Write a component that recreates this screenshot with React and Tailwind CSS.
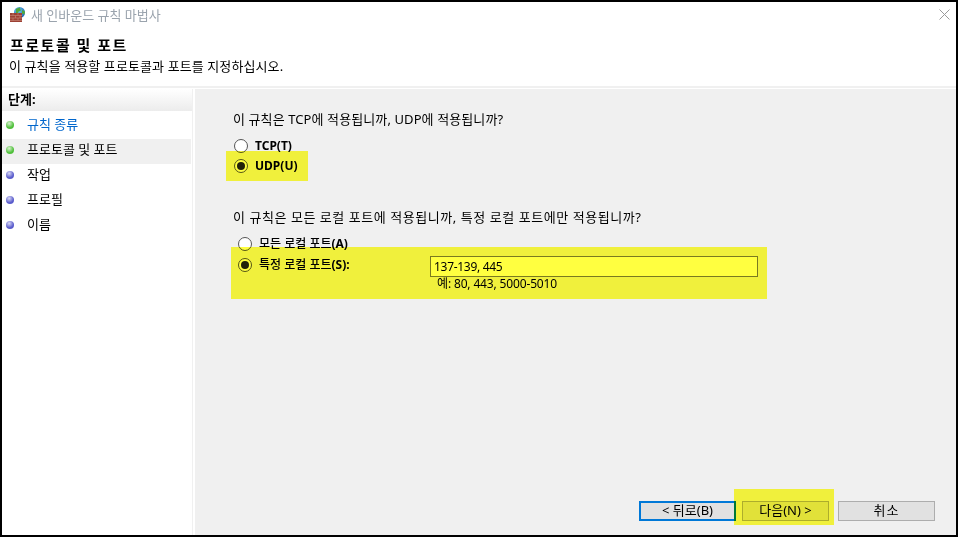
import React from "react";

const steps = [
  { label: "규칙 종류", color: "green", link: true },
  { label: "프로토콜 및 포트", color: "green", active: true },
  { label: "작업", color: "blue" },
  { label: "프로필", color: "blue" },
  { label: "이름", color: "blue" },
];

const FirewallIcon = () => (
  <svg width="16" height="16" viewBox="0 0 16 16" className="mb-[2px] shrink-0">
    <defs>
      <radialGradient id="globe" cx="0.4" cy="0.35" r="0.7">
        <stop offset="0" stopColor="#6fd0f0" />
        <stop offset="1" stopColor="#1a5fb0" />
      </radialGradient>
    </defs>
    <circle cx="9.5" cy="5.5" r="5.5" fill="url(#globe)" />
    <path d="M6 2 L9.5 0.5 L11 3.5 L8 5 L9 7 L6 6 Z" fill="#4fa83a" />
    <path d="M12 3 L15 4.5 L14.5 7.5 L12 6.5 Z" fill="#4fa83a" />
    <rect x="0" y="6" width="12" height="9" fill="#9c4034" />
    <path d="M0 8.5 H12 M0 11 H12 M0 13.5 H12 M3 6 V8.5 M8 6 V8.5 M5.5 8.5 V11 M10 8.5 V11 M3 11 V13.5 M8 11 V13.5" stroke="#c98a78" strokeWidth="0.6" fill="none" />
  </svg>
);

const CloseIcon = () => (
  <svg width="11" height="11" viewBox="0 0 11 11" className="mb-[4px]">
    <path d="M0.5 0.5 L10.5 10.5 M10.5 0.5 L0.5 10.5" stroke="#9a9a9a" strokeWidth="1" fill="none" />
  </svg>
);

const Radio = ({ checked }) => (
  <span className="flex h-[14px] w-[14px] shrink-0 items-center justify-center rounded-full border border-[#555] bg-white">
    {checked && <span className="h-[8px] w-[8px] rounded-full bg-[#222]" />}
  </span>
);

const RadioRow = ({ checked, label, accessKey, className }) => (
  <div className={`flex h-[20px] items-center gap-[7px] ${className || ""}`}>
    <Radio checked={checked} />
    <span className="text-[12px] font-bold text-black">
      {label && <span className="font-medium">{label}</span>}
      {accessKey}
    </span>
  </div>
);

const Dot = ({ color }) => (
  <span
    className={
      color === "green"
        ? "h-[8px] w-[8px] rounded-full bg-[radial-gradient(circle_at_40%_30%,#d8f0d0,#4fc03a_60%)]"
        : "h-[8px] w-[8px] rounded-full bg-[radial-gradient(circle_at_40%_30%,#d8d8f4,#5a5ccc_60%)]"
    }
  />
);

const Button = ({ children, className }) => (
  <button className={`flex h-[20px] items-center justify-center bg-[#e1e1e1] text-[13px] text-black ${className}`}>
    {children}
  </button>
);

const App = () => {
  return (
    <div
      className="relative h-[537px] w-[958px] overflow-hidden border-2 border-black bg-white"
      style={{ fontFamily: '"Noto Sans", "Noto Sans CJK KR", sans-serif' }}
    >
      <div className="flex h-[28px] items-center justify-between pl-[8px] pr-[6px]">
        <div className="flex items-center gap-[5px]">
          <FirewallIcon />
          <span className="text-[13px] text-[#9aa3ad]">새 인바운드 규칙 마법사</span>
        </div>
        <CloseIcon />
      </div>

      <div className="h-[58px] border-b-2 border-[#f0f0f0] pl-[7px]">
        <div className="pt-[3px] pl-[1px] text-[15px] leading-[24px] font-bold tracking-[1.5px] text-black">프로토콜 및 포트</div>
        <div className="text-[13px] leading-[18px] tracking-[0.1px] text-black">이 규칙을 적용할 프로토콜과 포트를 지정하십시오.</div>
      </div>

      <div className="flex h-[447px] pt-[1px]">
        <div className="w-[191px] shrink-0 border-r border-[#f0f0f0] bg-white">
          <div className="flex h-[22px] items-center bg-gradient-to-b from-white to-[#ececec] pl-[6px] text-[13px] font-bold text-black">
            단계:
          </div>
          <div className="w-[189px] pt-[3px]">
            {steps.map((step) => (
              <div
                key={step.label}
                className={`flex h-[25px] items-center gap-[13px] pb-[3px] pl-[4px] text-[13px] ${step.active ? "bg-[#f0f0f0]" : ""} ${step.link ? "text-[#0066cc]" : "text-black"}`}
              >
                <Dot color={step.color} />
                <span>{step.label}</span>
              </div>
            ))}
          </div>
        </div>

        <div className="ml-[2px] flex flex-1 flex-col bg-[#f0f0f0] pl-[38px]">
          <div className="pt-[21px] text-[13px] leading-[18px] tracking-[0.1px] text-black">이 규칙은 TCP에 적용됩니까, UDP에 적용됩니까?</div>
          <div className="pt-[8px] pl-[1px]">
            <RadioRow accessKey="TCP(T)" />
            <RadioRow checked accessKey="UDP(U)" />
          </div>
          <div className="pt-[32px] text-[13px] leading-[18px] tracking-[0.55px] text-black">이 규칙은 모든 로컬 포트에 적용됩니까, 특정 로컬 포트에만 적용됩니까?</div>
          <div className="pt-[7px]">
            <RadioRow className="ml-[5px] h-[21px]" label="모든 로컬 포트" accessKey="(A)" />
            <div className="flex h-[21px] items-center">
              <RadioRow checked className="ml-[5px] w-[192px]" label="특정 로컬 포트" accessKey="(S):" />
              <input
                readOnly
                value="137-139, 445"
                className="mt-[4px] h-[21px] w-[328px] border border-[#7a7a7a] bg-white pl-[3px] text-[12px] tracking-[-0.3px] text-black outline-none"
              />
            </div>
            <div className="mt-[1px] pl-[204px] text-[12px] leading-[16px] tracking-[-0.15px] text-black">예: 80, 443, 5000-5010</div>
          </div>
          <div className="mt-auto flex justify-end gap-[6px] pr-[21px] pb-[14px]">
            <Button className="w-[97px] border-2 border-[#0078d7]">&lt; 뒤로(B)</Button>
            <Button className="w-[87px] border border-[#adadad]">다음(N) &gt;</Button>
            <Button className="ml-[3px] w-[97px] border border-[#adadad] tracking-[1px]">취소</Button>
          </div>
        </div>
      </div>

      {/* marker highlights drawn over the dialog */}
      <div className="absolute top-[149px] left-[224px] h-[30px] w-[82px] bg-[#ffff40] mix-blend-multiply" />
      <div className="absolute top-[245px] left-[229px] h-[52px] w-[536px] bg-[#ffff40] mix-blend-multiply" />
      <div className="absolute top-[487px] left-[732px] h-[36px] w-[100px] bg-[#ffff40] mix-blend-multiply" />
    </div>
  );
};

export default App;
